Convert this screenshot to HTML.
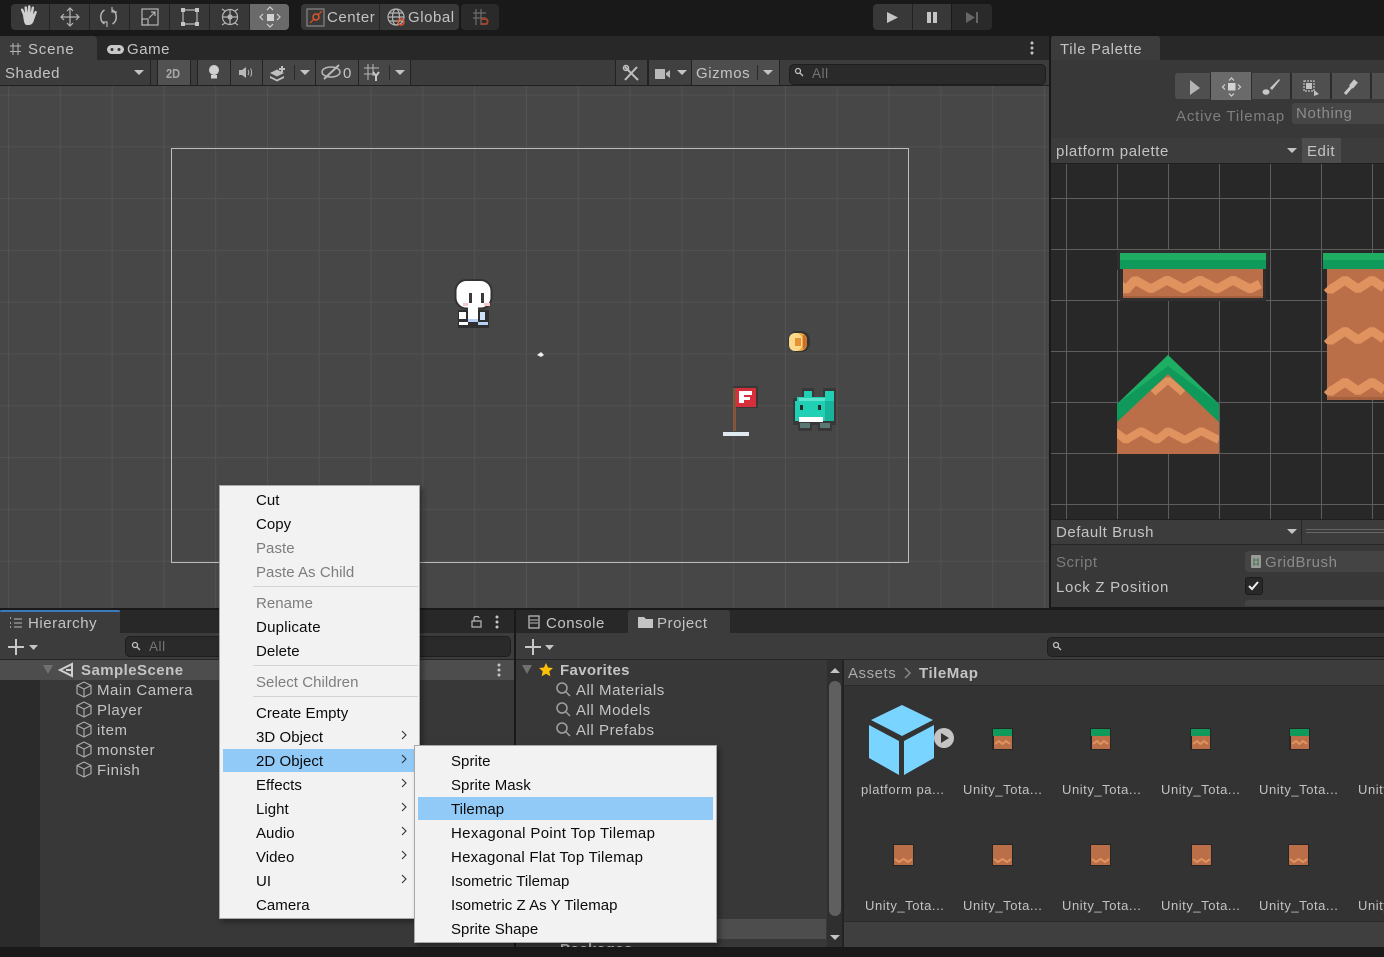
<!DOCTYPE html>
<html><head><meta charset="utf-8"><style>
html,body{margin:0;padding:0;background:#191919}
#r{position:relative;width:1384px;height:957px;overflow:hidden;background:#191919;font-family:"Liberation Sans",sans-serif;font-size:15px;letter-spacing:.55px;color:#c4c4c4}
#r div{position:absolute}
.t{white-space:nowrap;line-height:20px;height:20px;margin-top:2px}
.g{color:#858585}.b{font-weight:bold;letter-spacing:.45px}
.m{letter-spacing:.05px;color:#0b0b0b;font-size:15px}
.d{color:#7d7d7d}
.s{height:1px;background:#d4d4d4}
#r .l{font-size:13px;letter-spacing:.55px;color:#c2c2c2;margin-top:0}
svg{position:absolute;overflow:visible}
</style></head><body><div id="r">
<!-- toolbar -->
<div style="left:11px;top:4px;width:278px;height:26px;background:#383838;border-radius:4px"></div>
<div style="left:249px;top:4px;width:40px;height:26px;background:#6a6a6a;border-radius:0 4px 4px 0"></div>
<div style="left:301px;top:4px;width:158px;height:26px;background:#383838;border-radius:4px"></div>
<div style="left:461px;top:4px;width:38px;height:26px;background:#2a2a2a;border-radius:4px"></div>
<div style="left:873px;top:4px;width:78px;height:26px;background:#383838;border-radius:4px 0 0 4px"></div>
<div style="left:952px;top:4px;width:40px;height:26px;background:#2a2a2a;border-radius:0 4px 4px 0"></div>
<div class="t" style="left:327px;top:6px">Center</div>
<div class="t" style="left:408px;top:6px">Global</div>
<!-- scene panel -->
<div style="left:0;top:36px;width:1049px;height:24px;background:#282828"></div>
<div style="left:0;top:36px;width:97px;height:24px;background:#3c3c3c;border-radius:0 4px 0 0"></div>
<div class="t" style="left:28px;top:38px;letter-spacing:.8px">Scene</div>
<div class="t" style="left:127px;top:38px">Game</div>
<div style="left:0;top:60px;width:1049px;height:25px;background:#3c3c3c"></div>
<div style="left:0;top:85px;width:1049px;height:1px;background:#1f1f1f"></div>
<div style="left:158px;top:60px;width:32px;height:25px;background:#515151"></div>
<div style="left:198px;top:60px;width:212px;height:25px;background:#464646"></div>
<div style="left:692px;top:60px;width:87px;height:25px;background:#4d4d4d"></div>
<div style="left:616px;top:60px;width:75px;height:25px;background:#404040"></div>
<div class="t" style="left:5px;top:62px">Shaded</div>
<div class="t" style="left:166px;top:62px;font-size:13px;letter-spacing:0;color:#a8a8a8;font-weight:bold;transform:scaleX(.85);transform-origin:left">2D</div>
<div class="t" style="left:343px;top:62px">0</div>
<div class="t" style="left:696px;top:62px">Gizmos</div>
<div style="left:789px;top:64px;width:255px;height:19px;background:#2a2a2a;border:1px solid #1e1e1e;border-radius:5px"></div>
<div class="t g" style="left:812px;top:62px;font-size:13.5px;color:#757575">All</div>
<!-- scene view -->
<div style="left:0;top:86px;width:1049px;height:522px;background-color:#474747;background-image:linear-gradient(90deg,#525252 1px,transparent 1px),linear-gradient(#525252 1px,transparent 1px);background-size:51.8px 51.8px;background-position:8px 8.500px"></div>
<div style="left:171px;top:148px;width:736px;height:413px;border:1px solid #bdbdbd"></div>
<!-- tile palette -->
<div style="left:1051px;top:36px;width:333px;height:24px;background:#282828"></div>
<div style="left:1051px;top:36px;width:109px;height:24px;background:#3c3c3c;border-radius:3px 3px 0 0"></div>
<div class="t" style="left:1060px;top:38px;letter-spacing:.65px">Tile Palette</div>
<div style="left:1051px;top:60px;width:333px;height:104px;background:#383838"></div>
<div style="left:1175px;top:73px;width:209px;height:26px;background:#4f4f4f;border-radius:3px 0 0 3px"></div>
<div style="left:1211px;top:72px;width:40px;height:28px;background:#6a6a6a"></div>
<div class="t" style="left:1176px;top:105px;color:#7f7f7f;letter-spacing:.82px">Active Tilemap</div>
<div style="left:1292px;top:103px;width:92px;height:21px;background:#464646;border-radius:3px 0 0 3px"></div>
<div class="t" style="left:1296px;top:102px;color:#8c8c8c;letter-spacing:.7px">Nothing</div>
<div style="left:1051px;top:138px;width:333px;height:25px;background:#3c3c3c"></div>
<div style="left:1302px;top:138px;width:39px;height:25px;background:#4d4d4d"></div>
<div class="t" style="left:1056px;top:140px;letter-spacing:.6px">platform palette</div>
<div class="t" style="left:1307px;top:140px">Edit</div>
<div style="left:1051px;top:163px;width:333px;height:1px;background:#1f1f1f"></div>
<div style="left:1051px;top:164px;width:333px;height:355px;background-color:#282828;background-image:linear-gradient(90deg,#5e5e5e 1px,transparent 1px),linear-gradient(#5e5e5e 1px,transparent 1px);background-size:51px 51px;background-position:15px 34px"></div>
<div style="left:1051px;top:519px;width:333px;height:87px;background:#383838;border-top:1px solid #1f1f1f"></div>
<div style="left:1051px;top:520px;width:333px;height:24px;background:#3c3c3c;border-bottom:1px solid #262626"></div>
<div style="left:1301px;top:520px;width:1px;height:24px;background:#262626"></div>
<div style="left:1306px;top:529px;width:78px;height:1px;background:#666"></div>
<div style="left:1306px;top:532px;width:78px;height:1px;background:#666"></div>
<div class="t" style="left:1056px;top:521px">Default Brush</div>
<div class="t" style="left:1056px;top:551px;color:#7c7c7c">Script</div>
<div style="left:1245px;top:551px;width:139px;height:21px;background:#444;border-radius:4px 0 0 4px"></div>
<div class="t" style="left:1265px;top:551px;color:#8c8c8c">GridBrush</div>
<div class="t" style="left:1056px;top:576px;letter-spacing:.7px">Lock Z Position</div>
<div style="left:1245px;top:577px;width:16px;height:16px;background:#282828;border:1px solid #1c1c1c;border-radius:3px"></div>
<div style="left:1245px;top:600px;width:139px;height:6px;background:#444;border-radius:3px 0 0 0"></div>
<!-- hierarchy -->
<div style="left:0;top:610px;width:514px;height:23px;background:#282828"></div>
<div style="left:0;top:610px;width:120px;height:23px;background:#3c3c3c"></div>
<div style="left:0;top:610px;width:120px;height:2px;background:#3a79bb;border-radius:3px 3px 0 0"></div>
<div class="t" style="left:28px;top:612px">Hierarchy</div>
<div style="left:0;top:633px;width:514px;height:26px;background:#3c3c3c;border-bottom:1px solid #262626"></div>
<div style="left:125px;top:636px;width:384px;height:19px;background:#2a2a2a;border:1px solid #1e1e1e;border-radius:5px"></div>
<div class="t" style="left:149px;top:635px;font-size:13.5px;color:#757575">All</div>
<div style="left:0;top:660px;width:40px;height:287px;background:#2b2b2b"></div>
<div style="left:40px;top:660px;width:474px;height:287px;background:#383838"></div>
<div style="left:0;top:660px;width:514px;height:20px;background:#4d4d4d"></div>
<div class="t b" style="left:81px;top:659px">SampleScene</div>
<div class="t" style="left:97px;top:679px">Main Camera</div>
<div class="t" style="left:97px;top:699px">Player</div>
<div class="t" style="left:97px;top:719px">item</div>
<div class="t" style="left:97px;top:739px">monster</div>
<div class="t" style="left:97px;top:759px">Finish</div>
<!-- project -->
<div style="left:516px;top:610px;width:868px;height:23px;background:#282828"></div>
<div style="left:628px;top:610px;width:102px;height:23px;background:#3c3c3c;border-radius:3px 3px 0 0"></div>
<div class="t" style="left:546px;top:612px">Console</div>
<div class="t" style="left:657px;top:612px">Project</div>
<div style="left:516px;top:633px;width:868px;height:26px;background:#3c3c3c;border-bottom:1px solid #262626"></div>
<div style="left:1047px;top:637px;width:337px;height:18px;background:#2a2a2a;border:1px solid #1e1e1e;border-radius:5px 0 0 5px"></div>
<div style="left:516px;top:660px;width:311px;height:287px;background:#383838"></div>
<div style="left:560px;top:919px;width:266px;height:20px;background:#4d4d4d"></div>
<div class="t b" style="left:560px;top:659px;letter-spacing:.35px">Favorites</div>
<div class="t" style="left:576px;top:679px;letter-spacing:.55px">All Materials</div>
<div class="t" style="left:576px;top:699px;letter-spacing:.55px">All Models</div>
<div class="t" style="left:576px;top:719px;letter-spacing:.55px">All Prefabs</div>
<div class="t b" style="left:560px;top:938px;color:#c4c4c4">Packages</div>
<div style="left:827px;top:660px;width:15px;height:287px;background:#2f2f2f"></div>
<div style="left:829px;top:681px;width:12px;height:235px;background:#5f5f5f;border-radius:6px"></div>
<div style="left:842px;top:660px;width:2px;height:287px;background:#232323"></div>
<div style="left:844px;top:660px;width:540px;height:287px;background:#333"></div>
<div style="left:844px;top:660px;width:540px;height:25px;background:#3c3c3c;border-bottom:1px solid #2a2a2a"></div>
<div class="t" style="left:848px;top:662px;color:#aaa">Assets</div>
<div class="t b" style="left:919px;top:662px;letter-spacing:.55px">TileMap</div>
<div style="left:844px;top:921px;width:540px;height:26px;background:#3f3f3f;border-top:1px solid #2a2a2a"></div>
<div class="t l" style="left:861px;top:780px">platform pa...</div>
<div class="t l" style="left:963px;top:780px">Unity_Tota...</div>
<div class="t l" style="left:1062px;top:780px">Unity_Tota...</div>
<div class="t l" style="left:1161px;top:780px">Unity_Tota...</div>
<div class="t l" style="left:1259px;top:780px">Unity_Tota...</div>
<div class="t l" style="left:1358px;top:780px">Unity_Tota...</div>
<div class="t l" style="left:865px;top:896px">Unity_Tota...</div>
<div class="t l" style="left:963px;top:896px">Unity_Tota...</div>
<div class="t l" style="left:1062px;top:896px">Unity_Tota...</div>
<div class="t l" style="left:1161px;top:896px">Unity_Tota...</div>
<div class="t l" style="left:1259px;top:896px">Unity_Tota...</div>
<div class="t l" style="left:1358px;top:896px">Unity_Tota...</div>
<div style="left:0;top:947px;width:1384px;height:10px;background:#191919"></div>

<!-- all icons -->
<svg style="left:0;top:0" width="1384" height="957" viewBox="0 0 1384 957">
<defs>
<g id="cube" fill="none" stroke="#a9a9a9" stroke-width="1.2"><path d="M8 1 15 4.500V12.500L8 16 1 12.500V4.500ZM1 4.500 8 8 15 4.500M8 8V16"/></g>
<g id="mag" fill="none" stroke="#a0a0a0" stroke-width="1.5"><circle cx="6" cy="6" r="5"/><path d="M10 10 14 14"/></g>
<g id="tg"><rect x="-1" y="-1" width="21" height="22" fill="#262626"/><rect width="19" height="7" fill="#0f9a5c"/><rect x="1" y="7" width="18" height="13" fill="#bb6f49"/><path d="M2 15l4-3 3.500 3 3.500-3 4 3" fill="none" stroke="#e0925f" stroke-width="2"/></g>
<g id="td"><rect x="-1" y="-1" width="21" height="22" fill="#262626"/><rect width="19" height="20" fill="#bb6f49"/><path d="M1 14l4 3 4.500-3 4.500 3 4-3" fill="none" stroke="#e0925f" stroke-width="2"/></g>
</defs>
<g fill="none" stroke="#b4b4b4" stroke-width="1.200">
<!-- hand -->
<path fill="#d0d0d0" stroke="none" d="M23 15l-2-5c-.5-1.500 1.500-2.200 2.200-.7L25 13 24.500 7.500c0-1.700 2.300-1.700 2.500 0L28 13V6.500c0-1.700 2.500-1.700 2.500 0V13l1.200-5.500c.4-1.600 2.600-1.200 2.300.4L33 14.500l1.700-3c.9-1.300 2.700-.3 2 1.100L34 20c-.7 3-2.500 5-5 5h-2c-2 0-3-1.500-4-10z"/>
<!-- move -->
<path d="M70 8V26M61 17H79M67 11l3-3 3 3M67 23l3 3 3-3M64 14l-3 3 3 3M76 14l3 3-3 3"/>
<!-- rotate -->
<path stroke-width="1.500" d="M105 10c-5 3-5 11 0 14M113 24c5-3 5-11 0-14" transform="translate(-.5 0)"/><path d="M112 7v5h5M107 27v-5h-5"/>
<!-- scale -->
<rect x="142" y="9" width="16" height="16"/><rect x="142" y="19" width="6" height="6"/><path d="M149 18l6-6M151 12h4v4"/>
<!-- rect -->
<path d="M183 10H197M183 24H197M183 10V24M197 10V24"/><g fill="#c4c4c4" stroke="none"><rect x="181" y="8" width="4" height="4"/><rect x="195" y="8" width="4" height="4"/><rect x="181" y="22" width="4" height="4"/><rect x="195" y="22" width="4" height="4"/></g>
<!-- transform -->
<circle cx="230" cy="17" r="7.500"/><path d="M230 9V25M222 17H238M222 9l3 2M238 9l-3 2M222 25l3-2M238 25l-3-2"/><circle cx="230" cy="17" r="2" fill="#b4b4b4"/>
<!-- custom -->
<rect x="267" y="14" width="7" height="7" fill="#d2d2d2" stroke="none"/><path stroke="#d2d2d2" d="M267 10l3-3 3 3M267 24l3 3 3-3M263 14l-3 3 3 3M277 14l3 3-3 3"/>
<!-- center icon -->
<rect x="307" y="9" width="17" height="17" stroke="#888"/><circle cx="316" cy="17" r="3" stroke="#e2552a" stroke-width="1.500"/><path stroke="#e2552a" d="M310 23l4-4M318 15l4-4"/>
<!-- global -->
<circle cx="396" cy="17" r="8"/><ellipse cx="396" cy="17" rx="3.500" ry="8"/><path d="M388 17H404M389 13H403M389 21H403"/><circle cx="401" cy="22" r="3" stroke="#e2552a" stroke-width="1.500"/>
<!-- snap -->
<path stroke="#6c6c6c" d="M476 9V25M481 9V25M473 13H486M473 18H486"/><path stroke="#a0452c" stroke-width="2" d="M481 19h5c2 0 2 5 0 5h-5"/>
</g>
<!-- play -->
<path fill="#c4c4c4" d="M887 12 898 17.500 887 23Z"/><rect x="927" y="12" width="4" height="11" fill="#c4c4c4"/><rect x="933" y="12" width="4" height="11" fill="#c4c4c4"/><path fill="#666" d="M966 12 975 17.500 966 23Z"/><rect x="976" y="12" width="2" height="11" fill="#666"/>
<rect x="912" y="4" width="1" height="26" fill="#222"/><g fill="#242424"><rect x="49" y="4" width="1" height="26"/><rect x="89" y="4" width="1" height="26"/><rect x="129" y="4" width="1" height="26"/><rect x="169" y="4" width="1" height="26"/><rect x="209" y="4" width="1" height="26"/><rect x="249" y="4" width="1" height="26"/><rect x="379" y="4" width="1" height="26"/></g>
<!-- scene tab -->
<path fill="none" stroke="#b4b4b4" d="M13 43V55M18 43V55M10 46H21M10 51.500H21"/>
<rect x="107" y="45" width="17" height="9" rx="4.500" fill="#c8c8c8"/><circle cx="112" cy="49.500" r="1.500" fill="#333"/><circle cx="119" cy="49.500" r="1.500" fill="#333"/>
<!-- arrows -->
<g fill="#c4c4c4"><path d="M134 70h10l-5 5zM300 70h10l-5 5zM395 70h10l-5 5zM677 70h10l-5 5zM763 70h10l-5 5z"/>
<path d="M1287 148h10l-5 5zM1287 529h10l-5 5zM29 645h9l-4.500 5zM545 645h9l-4.500 5z"/>
<circle cx="1032" cy="43" r="1.500"/><circle cx="1032" cy="48" r="1.500"/><circle cx="1032" cy="53" r="1.500"/>
<circle cx="497" cy="617" r="1.500"/><circle cx="497" cy="622" r="1.500"/><circle cx="497" cy="627" r="1.500"/>
<circle cx="499" cy="665" r="1.500"/><circle cx="499" cy="670" r="1.500"/><circle cx="499" cy="675" r="1.500"/>
<path d="M830 673h10l-5-5zM830 935h10l-5 5z"/></g>
<g fill="#222"><rect x="150" y="60" width="1" height="25"/><rect x="157" y="60" width="1" height="25"/><rect x="190" y="60" width="1" height="25"/><rect x="197" y="60" width="1" height="25"/><rect x="230" y="60" width="1" height="25"/><rect x="262" y="60" width="1" height="25"/><rect x="315" y="60" width="1" height="25"/><rect x="358" y="60" width="1" height="25"/><rect x="410" y="60" width="1" height="25"/><rect x="615" y="60" width="1" height="25"/><rect x="647" y="60" width="2" height="25"/><rect x="691" y="60" width="1" height="25"/><rect x="779" y="60" width="1" height="25"/></g>
<g fill="#2a2a2a"><rect x="294" y="65" width="1" height="15"/><rect x="389" y="65" width="1" height="15"/><rect x="757" y="65" width="1" height="15"/></g>
<!-- bulb -->
<circle cx="214" cy="70" r="5" fill="#d0d0d0"/><rect x="211" y="75" width="6" height="3.500" fill="#d0d0d0"/>
<!-- audio -->
<path fill="#b8b8b8" d="M239 70h3l4-3v11l-4-3h-3z"/><path stroke="#b8b8b8" fill="none" d="M248 70c1 1.500 1 3.500 0 5M250.500 68.500c1.500 2 1.500 6 0 8"/>
<!-- effects -->
<path fill="#c0c0c0" d="M270 73l7-3.500 7 3.500-7 3.500zM270 76l7 3.500 7-3.500v2l-7 3.500-7-3.500z"/><path stroke="#c0c0c0" stroke-width="2" d="M282 66v6M279 69h6"/>
<!-- hidden -->
<ellipse cx="331" cy="72" rx="9" ry="5" fill="none" stroke="#b8b8b8" stroke-width="1.500"/><path d="M324 79 339 65" stroke="#b8b8b8" stroke-width="2"/>
<!-- grid y -->
<path fill="none" stroke="#b8b8b8" d="M368 64V80M373 64V76M364 68H379M364 74H374"/><path stroke="#c8c8c8" stroke-width="2" fill="none" d="M373 72l3 4 3-4M376 76v5"/>
<!-- tools -->
<path stroke="#c0c0c0" stroke-width="2" d="M625 67l13 13M637 67l-12 13"/>
<circle cx="626" cy="68" r="2.500" fill="none" stroke="#c0c0c0" stroke-width="1.500"/>
<!-- camera -->
<rect x="655" y="69" width="10" height="10" fill="#b8b8b8"/><path fill="#b8b8b8" d="M666 73l4-3v8l-4-3z"/>
<!-- search -->
<g fill="none" stroke="#c0c0c0" stroke-width="1.300"><circle cx="798" cy="71" r="2.500"/><path d="M800 73l3 3"/><circle cx="135" cy="645" r="2.500"/><path d="M137 647l3 3"/><circle cx="1056" cy="645" r="2.500"/><path d="M1058 647l3 3"/></g>
<!-- palette tools -->
<path fill="#b4b4b4" d="M1190 80 1200 88 1190 95Z"/>
<rect x="1228" y="83" width="7.500" height="7.500" fill="#d2d2d2"/><path stroke="#d2d2d2" fill="none" stroke-width="1.200" d="M1229 80.500l2.500-2.500 2.500 2.500M1229 93.500l2.500 2.500 2.500-2.500M1225 84.500l-2.500 2.500 2.500 2.500M1238 84.500l2.500 2.500-2.500 2.500"/>
<path fill="#c8c8c8" d="M1270 88l9-9 1 1-8 10z"/><ellipse cx="1266" cy="92" rx="3.500" ry="2.800" fill="#c8c8c8"/>
<rect x="1304" y="81" width="10" height="10" fill="none" stroke="#c0c0c0" stroke-dasharray="2 1" stroke-width="1.200"/><rect x="1306" y="83" width="6" height="6" fill="#c0c0c0"/><path fill="#c0c0c0" d="M1314 90l5 4-5 2z"/>
<path stroke="#c8c8c8" stroke-width="3" d="M1345 94 1352 86"/><path stroke="#c8c8c8" stroke-width="5" d="M1351 87 1356 81"/>
<g fill="#2c2c2c"><rect x="1210" y="73" width="1" height="26"/><rect x="1251" y="73" width="1" height="26"/><rect x="1290" y="73" width="2" height="26"/><rect x="1330" y="73" width="2" height="26"/><rect x="1370" y="73" width="2" height="26"/></g>
<!-- gridbrush/check -->
<rect x="1251" y="555" width="10" height="13" rx="1" fill="#9a9a9a"/><path stroke="#4c7a52" stroke-width="1" d="M1254 558V566M1258 558V566M1253 560H1259M1253 564H1259"/>
<path fill="none" stroke="#eee" stroke-width="2" d="M1249 586l3 3 6-7"/>
<!-- hierarchy icons -->
<g fill="none" stroke="#b8b8b8"><path d="M14 619H22M14 623H22M14 627H22"/><path stroke-width="1.500" d="M10 618h1M10 623h1M10 627h1"/><path stroke-width="2" d="M8 647H24M16 639V655M525 647H541M533 639V655" stroke="#c8c8c8"/>
<path stroke-width="1.200" d="M472 627h9v-6h-9zM474 621v-3c0-2 5-2 5 0"/></g>
<path fill="#707070" d="M43 665h10l-5 9zM522 665h10l-5 9z"/>
<path fill="none" stroke="#d0d0d0" stroke-width="2" d="M60 670 72 664V676ZM66 670H72"/>
<use href="#cube" x="76" y="681"/><use href="#cube" x="76" y="701"/><use href="#cube" x="76" y="721"/><use href="#cube" x="76" y="741"/><use href="#cube" x="76" y="761"/>
<!-- console/project tab icons -->
<rect x="529" y="616" width="10" height="12" fill="none" stroke="#b8b8b8" stroke-width="1.300"/><path stroke="#b8b8b8" d="M530 620H538M530 623H538"/>
<path fill="#c4c4c4" d="M638 617h6l2 2h7v9h-15z"/>
<path fill="#ffc107" d="M546 663l2 4.500 5 .5-3.700 3.300 1 5-4.300-2.600-4.300 2.600 1-5L539 668l5-.5z"/>
<use href="#mag" x="556" y="682"/><use href="#mag" x="556" y="702"/><use href="#mag" x="556" y="722"/>
<path fill="none" stroke="#888" stroke-width="1.500" d="M905 668l5 5-5 5"/>
<!-- palette asset cube -->
<path fill="#79d4ff" d="M902 705 933 720 902 736 871 720Z"/><path fill="#79d4ff" d="M869 725 899 741V775L869 758Z"/><path fill="#79d4ff" d="M904 741 934 725V758L904 775Z"/>
<circle cx="944" cy="738" r="10" fill="#c4c4c4"/><path fill="#333" d="M941 733l8 5-8 5z"/>
<use href="#tg" x="993" y="729"/><use href="#tg" x="1091" y="729"/><use href="#tg" x="1191" y="729"/><use href="#tg" x="1290" y="729"/>
<use href="#td" x="894" y="845"/><use href="#td" x="993" y="845"/><use href="#td" x="1091" y="845"/><use href="#td" x="1192" y="845"/><use href="#td" x="1289" y="845"/>
<!-- palette art -->
<g shape-rendering="crispEdges">
<rect x="1117" y="250" width="152" height="20" fill="#2e2e2e"/><rect x="1120" y="270" width="146" height="31" fill="#2e2e2e"/>
<rect x="1120" y="253" width="146" height="7" fill="#1ead63"/><rect x="1120" y="260" width="146" height="9" fill="#0f9a5c"/>
<rect x="1123" y="269" width="140" height="29" fill="#bb6f49"/><rect x="1123" y="296" width="140" height="2" fill="#a5603e"/>
<rect x="1323" y="253" width="61" height="7" fill="#1ead63"/><rect x="1323" y="260" width="61" height="9" fill="#0f9a5c"/>
<rect x="1327" y="269" width="57" height="131" fill="#bb6f49"/><rect x="1327" y="397" width="57" height="3" fill="#a5603e"/>
</g>
<clipPath id="c1"><rect x="1123" y="269" width="140" height="27"/></clipPath>
<g fill="none" stroke="#e0925f" stroke-width="9" stroke-linejoin="bevel">
<path clip-path="url(#c1)" d="M1120 285l6 5 9-10 16 9 16-9 17 9 16-9 17 9 16-9 17 9 10-5"/>
<path d="M1327 287l3 3 15-10 13 9 14-9 12 8M1327 338l3 3 15-10 13 9 14-9 12 8M1327 389l3 3 15-10 13 9 14-9 12 8"/>
</g>
<path fill="#bb6f49" d="M1168 372 1219 422V454H1117V422Z"/>
<path fill="#0f9a5c" d="M1168 355 1219 404V422L1168 374 1117 422V404Z"/><path fill="#1ead63" d="M1168 355 1219 404 1168 366 1117 404Z"/>
<clipPath id="c2"><rect x="1117" y="420" width="102" height="34"/></clipPath>
<path clip-path="url(#c2)" fill="none" stroke="#e0925f" stroke-width="8" stroke-linejoin="bevel" d="M1114 431l12 9 15-9 16 9 11-9 17 9 16-9 18 9"/>
<path fill="none" stroke="#e0925f" stroke-width="7" stroke-linejoin="bevel" d="M1153 393l15-13 15 13"/>
<!-- ghost -->
<rect x="458" y="310" width="31" height="18" fill="#2f2f2f"/>
<rect x="455.500" y="280" width="36" height="28.500" rx="11" fill="#fff" stroke="#333" stroke-width="2"/>
<g shape-rendering="crispEdges">
<rect x="468" y="305" width="10" height="15" fill="#fff"/><rect x="468" y="319" width="10" height="3" fill="#b8d0f5"/>
<rect x="459" y="312" width="7" height="7" fill="#fff"/><rect x="459" y="322" width="9" height="3" fill="#fff"/><rect x="478" y="322" width="10" height="3" fill="#b8d0f5"/><rect x="480" y="312" width="5" height="8" fill="#cfe0fa"/>
<rect x="469" y="293" width="3" height="10" fill="#3a3a3a"/><rect x="481" y="293" width="3" height="10" fill="#3a3a3a"/>
<rect x="463" y="303" width="5" height="3" fill="#f8c9cc"/><rect x="484" y="303" width="6" height="3" fill="#f8c9cc"/>
</g>
<path d="M537 355l4-3 3 3-3 2z" fill="#eee"/>
<!-- coin -->
<rect x="788" y="331" width="22" height="21" rx="9" fill="#333"/>
<rect x="789" y="333" width="18" height="18" rx="7" fill="#f0a640"/><rect x="789" y="333" width="13" height="18" rx="6" fill="#fbd88a"/><rect x="795" y="338" width="6" height="8" fill="#e39235"/><path d="M803 335h1c2 2 3 4 3 7s-1 5-3 7h-1z" fill="#c9702a"/>
<!-- flag -->
<g shape-rendering="crispEdges"><rect x="733" y="386" width="25" height="22" fill="#383838"/><rect x="733" y="388" width="3" height="43" fill="#82553c"/><rect x="736" y="388" width="20" height="19" fill="#d62f3a"/><rect x="739" y="391" width="13" height="4" fill="#fff"/><rect x="739" y="391" width="5" height="12" fill="#fff"/><rect x="739" y="397" width="11" height="3" fill="#fff"/><rect x="723" y="432" width="26" height="4" fill="#dfe9f0"/></g>
<!-- monster -->
<g shape-rendering="crispEdges">
<g fill="#383838"><rect x="802" y="388" width="12" height="10"/><rect x="823" y="388" width="13" height="10"/><rect x="793" y="398" width="43" height="27"/><rect x="798" y="423" width="14" height="8"/><rect x="818" y="423" width="14" height="8"/></g>
<g fill="#1fd0b4"><rect x="804" y="391" width="8" height="6"/><rect x="825" y="391" width="9" height="8"/><rect x="797" y="397" width="37" height="4"/><rect x="795" y="401" width="39" height="20"/></g>
<rect x="799" y="398" width="26" height="3" fill="#5de4cf"/><rect x="825" y="401" width="9" height="20" fill="#17b49b"/>
<rect x="800" y="405" width="3" height="5" fill="#2a2a2a"/><rect x="818" y="405" width="3" height="5" fill="#2a2a2a"/>
<rect x="799" y="417" width="24" height="5" fill="#fff"/>
<rect x="800" y="423" width="10" height="5" fill="#5a7774"/><rect x="820" y="423" width="10" height="5" fill="#5a7774"/>
</g>
</svg>

<!-- menu 1 -->
<div style="left:219px;top:485px;width:199px;height:432px;background:#f2f2f2;border:1px solid #a8a8a8;box-shadow:3px 3px 5px rgba(0,0,0,.35)">
<div style="left:3px;top:263px;width:192px;height:23px;background:#91c9f7"></div>
<div class="t m" style="top:3px;left:36px">Cut</div>
<div class="t m" style="top:27px;left:36px">Copy</div>
<div class="t m d" style="top:51px;left:36px">Paste</div>
<div class="t m d" style="top:75px;left:36px">Paste As Child</div>
<div class="s" style="left:33px;top:100px;width:165px"></div>
<div class="t m d" style="top:106px;left:36px">Rename</div>
<div class="t m" style="top:130px;left:36px;letter-spacing:.25px">Duplicate</div>
<div class="t m" style="top:154px;left:36px">Delete</div>
<div class="s" style="left:33px;top:179px;width:165px"></div>
<div class="t m d" style="top:185px;left:36px">Select Children</div>
<div class="s" style="left:33px;top:210px;width:165px"></div>
<div class="t m" style="top:216px;left:36px">Create Empty</div>
<div class="t m" style="top:240px;left:36px">3D Object</div>
<div class="t m" style="top:264px;left:36px">2D Object</div>
<div class="t m" style="top:288px;left:36px">Effects</div>
<div class="t m" style="top:312px;left:36px">Light</div>
<div class="t m" style="top:336px;left:36px">Audio</div>
<div class="t m" style="top:360px;left:36px">Video</div>
<div class="t m" style="top:384px;left:36px">UI</div>
<div class="t m" style="top:408px;left:36px">Camera</div>
<svg style="left:0;top:0" width="199" height="432"><path fill="none" stroke="#333" stroke-width="1.100" d="M182 245l4 4-4 4M182 269l4 4-4 4M182 293l4 4-4 4M182 317l4 4-4 4M182 341l4 4-4 4M182 365l4 4-4 4M182 389l4 4-4 4"/></svg>
</div>
<!-- menu 2 -->
<div style="left:414px;top:745px;width:301px;height:196px;background:#f2f2f2;border:1px solid #a8a8a8;box-shadow:3px 3px 5px rgba(0,0,0,.35)">
<div style="left:3px;top:51px;width:295px;height:23px;background:#91c9f7"></div>
<div class="t m" style="top:4px;left:36px">Sprite</div>
<div class="t m" style="top:28px;left:36px">Sprite Mask</div>
<div class="t m" style="top:52px;left:36px">Tilemap</div>
<div class="t m" style="top:76px;left:36px;letter-spacing:.35px">Hexagonal Point Top Tilemap</div>
<div class="t m" style="top:100px;left:36px;letter-spacing:.25px">Hexagonal Flat Top Tilemap</div>
<div class="t m" style="top:124px;left:36px">Isometric Tilemap</div>
<div class="t m" style="top:148px;left:36px">Isometric Z As Y Tilemap</div>
<div class="t m" style="top:172px;left:36px">Sprite Shape</div>
</div>
</div></body></html>
